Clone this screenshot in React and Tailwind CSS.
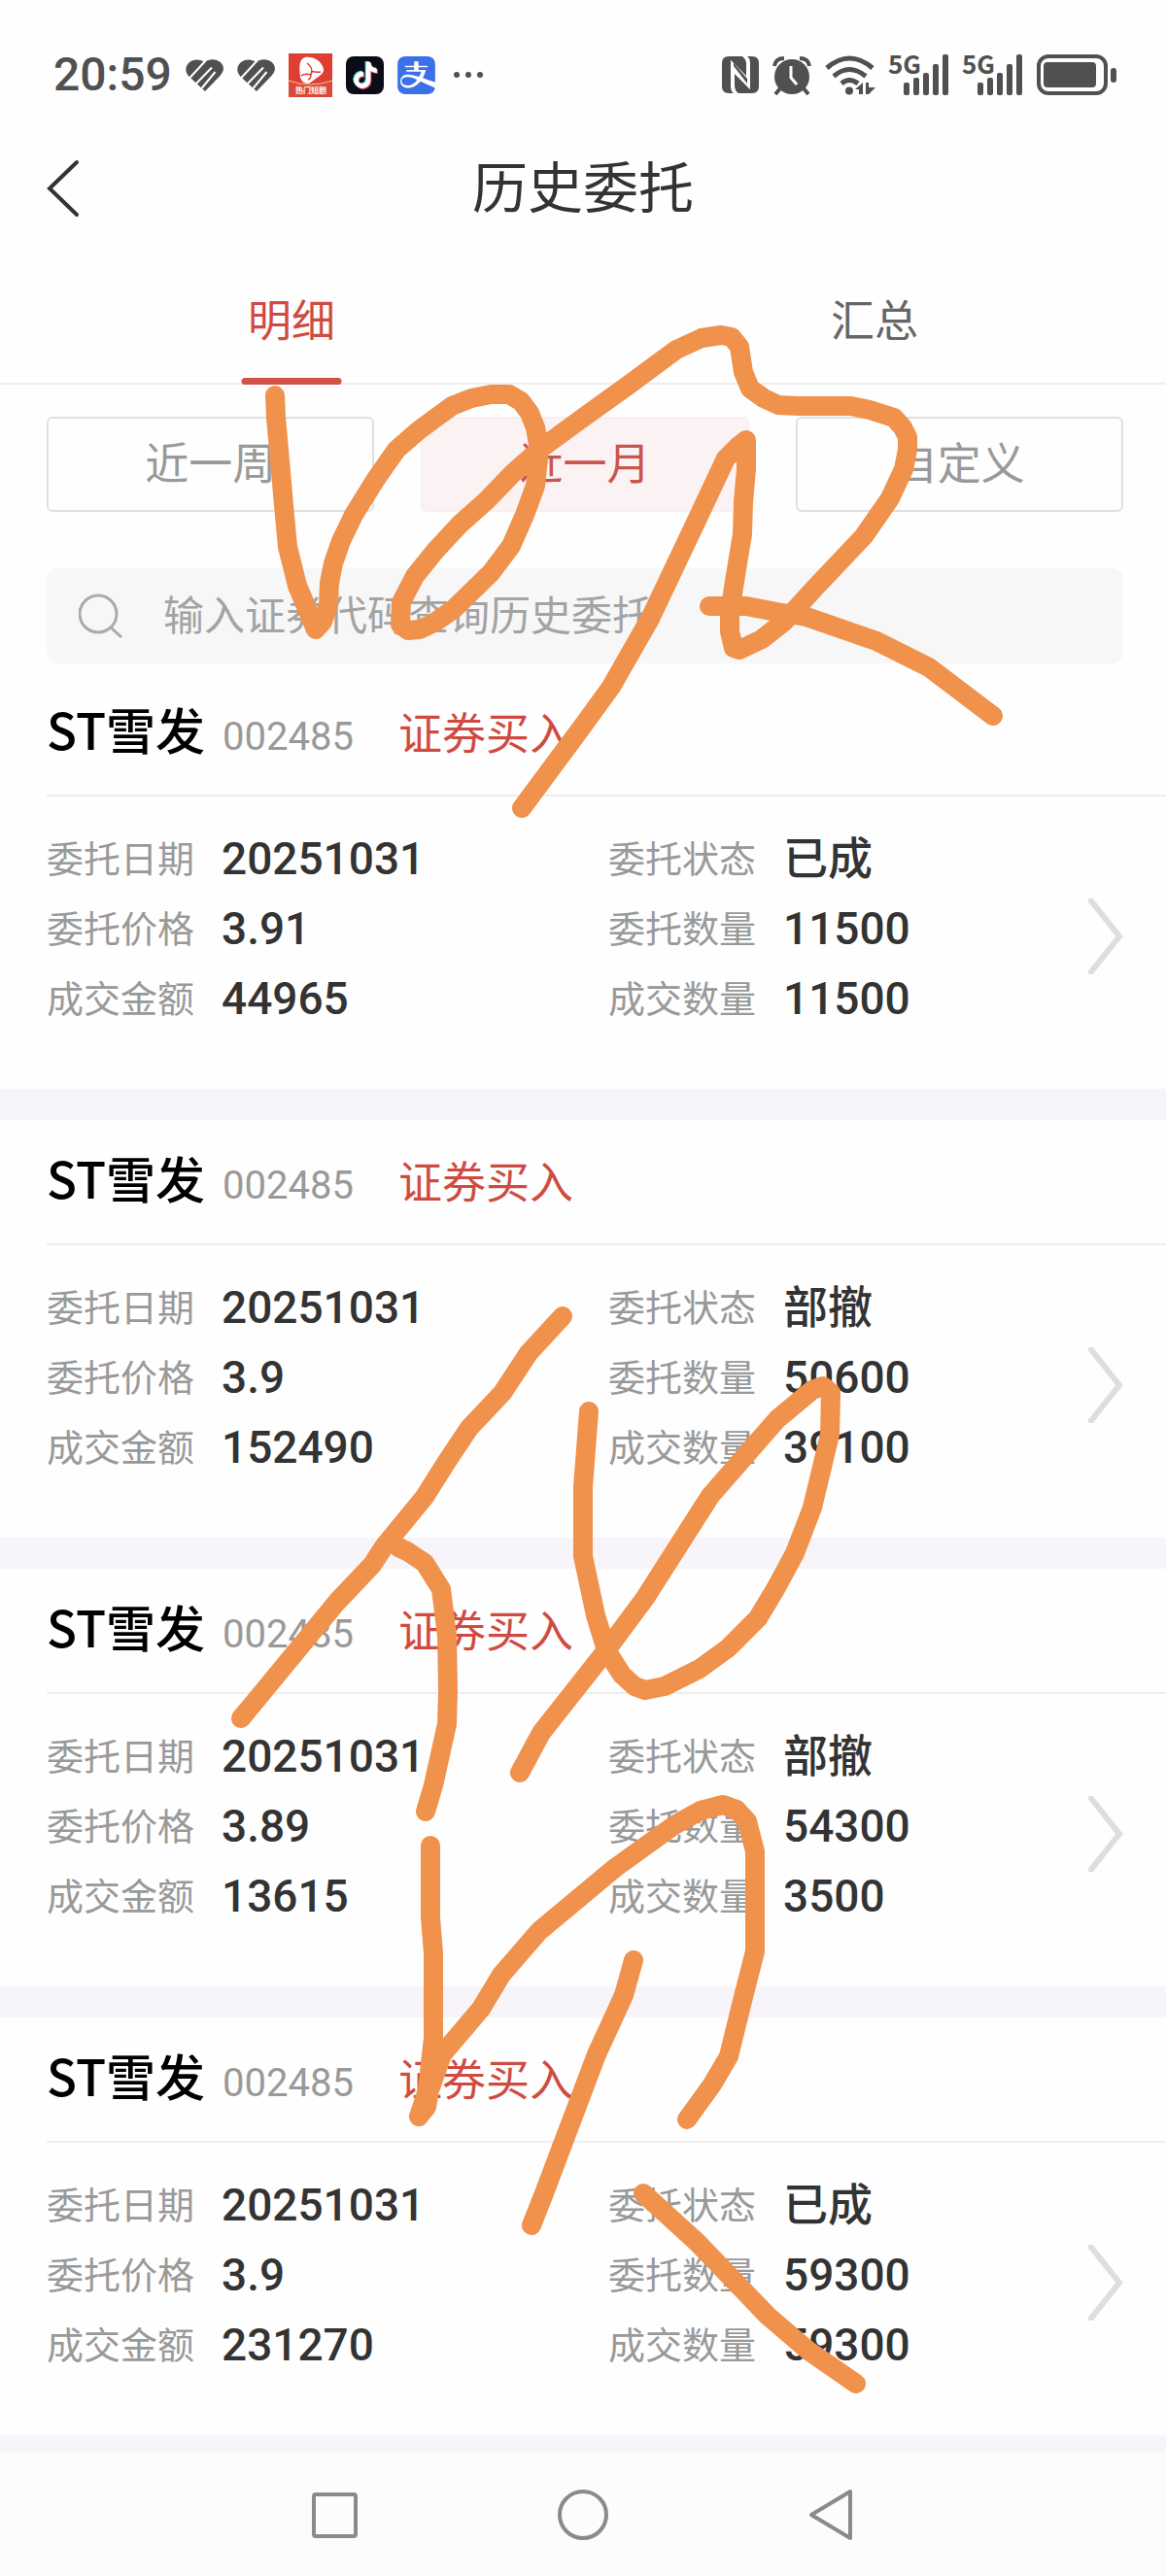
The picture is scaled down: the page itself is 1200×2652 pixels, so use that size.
import React, { useState } from "react";
import { FaTiktok } from "react-icons/fa6";
import { SiAlipay } from "react-icons/si";

const TABS = ["明细", "汇总"];
const RANGES = ["近一周", "近一月", "自定义"];

const ORDERS = [
  { date: "20251031", price: "3.91", amount: "44965", status: "已成", count: "11500", filled: "11500" },
  { date: "20251031", price: "3.9", amount: "152490", status: "部撤", count: "50600", filled: "39100" },
  { date: "20251031", price: "3.89", amount: "13615", status: "部撤", count: "54300", filled: "3500" },
  { date: "20251031", price: "3.9", amount: "231270", status: "已成", count: "59300", filled: "59300" },
];

// Freehand strokes, in page coordinates
const STROKES = [
  "283,407 284,430 287,463 292,520 296,563 306,603 325,648 332,640 338,623 339,600 343,580 351,557 364,530 387,493 408,463 431,443 465,418 485,410 505,406 524,406 536,413 545,425 551,440 555,463 551,500 540,530 526,562 505,590 467,627 447,641 432,648 420,649 412,643 413,620 427,593 448,567 473,540 501,515 528,487 555,463 600,430 646,397 696,360 722,348 742,345 753,347 761,357 763,370 765,383 772,400 786,410 801,417 822,418 876,418 895,422 920,430 929,440 934,450 934,463 930,483 916,513 889,552 837,607 807,640 784,658 761,669 755,667 751,650 751,630 759,580 764,550 765,517 768,483 768,453 759,460 747,472 715,540 669,637 629,707 600,747 537,832",
  "730,624 768,624 799,630 830,635 902,660 956,687 1022,737",
  "579,1355 544,1393 517,1434 483,1470 459,1506 437,1541 396,1591 383,1611 347,1649 258,1757 248,1769",
  "410,1593 419,1597 437,1609 454,1636 460,1684 461,1741 460,1775 446,1838 438,1865",
  "606,1453 600,1531 600,1602 613,1663 624,1699 640,1724 653,1736 664,1740 684,1736 720,1718 749,1697 780,1666 798,1636 818,1599 836,1552 854,1477 855,1434 847,1427 836,1431 800,1461 731,1540 664,1645 624,1699 557,1784 535,1825",
  "443,1900 443,1974 446,2011 446,2098 440,2152 431,2179 439,2169 442,2152 455,2115 495,2068 516,2033 555,1988 633,1923 694,1879 721,1864 744,1858 758,1863 769,1875 777,1906 777,2009 765,2056 750,2117 733,2146 707,2182",
  "652,2018 642,2054 614,2115 580,2205 560,2258 547,2291",
  "662,2258 717,2308 790,2384 832,2420 881,2454",
];

function HeartIcon() {
  return (
    <svg viewBox="0 0 39 33" className="h-[33px] w-[39px]" fill="none">
      <path d="M19.500 3C16 0 8-1 3.500 3.500c-4.500 4.500-4 10 0 14.300L20 33l15.500-16c4.400-4.500 4.500-10 .5-13.700-4.500-4.300-12-4-16.500-.3z" fill="#505050" />
      <path d="M4 19.500 21 1M10 26 27 8.500M16.500 30 30.500 13" stroke="#fefefe" strokeWidth="2" />
    </svg>
  );
}

function DramaIcon() {
  return (
    <svg viewBox="0 0 45 45" className="h-[45px] w-[45px]">
      <rect width="45" height="45" fill="#df3f33" />
      <path d="M0 28q22 8 45 0v17H0z" fill="#d94a3a" />
      <path d="M0 28q22 8 45 0" stroke="#f6c08c" fill="none" />
      <path d="M17 4c9-1 17 4 19 12 1 5-6 8-12 13-5 4-11 1-12-5-1-8-2-18 5-20z" fill="#fff" />
      <path d="M19 10q7 5 4 12M23 22q-6-2-10 1M23 18q6 2 10 1M23 22q0 4-3 5" stroke="#df3f33" strokeWidth="1.500" fill="none" />
      <text x="23" y="41" fontSize="8" fontWeight="700" fill="#fff" textAnchor="middle">热门短剧</text>
    </svg>
  );
}

function TiktokIcon() {
  return (
    <span className="relative flex h-[39px] w-[39px] items-center justify-center rounded-lg bg-[#0c0c18]">
      <FaTiktok className="absolute left-[6px] top-[5px] h-[27px] w-[26px] text-[#4fe0e4]" />
      <FaTiktok className="absolute left-[8px] top-[7px] h-[27px] w-[26px] text-[#ef4b62]" />
      <FaTiktok className="absolute left-[7px] top-[6px] h-[27px] w-[26px] text-white" />
    </span>
  );
}

function NfcIcon() {
  return (
    <svg viewBox="0 0 38 38" className="h-[38px] w-[38px]" fill="#505050">
      <path d="M7 0h14q4 3 4 8v12L9 4v27q0 5 3 7H7q-7 0-7-7V7q0-7 7-7z" />
      <path d="M31 38H17q-4-3-4-8V18l16 16V7q0-5-3-7h5q7 0 7 7v24q0 7-7 7z" />
      <path d="M9 4v6l20 24v-6z" fill="#fefefe" />
      <path d="M12 10v-3l14 16v5z" />
    </svg>
  );
}

function AlarmIcon() {
  return (
    <svg viewBox="0 0 40 41" className="h-[41px] w-[40px]" fill="none" stroke="#505050">
      <circle cx="20" cy="22" r="18" fill="#505050" stroke="none" />
      <path d="M2 11Q3 3 12 3M28 3q9 0 10 8" strokeWidth="4" />
      <path d="m8 34-5 6M32 34l5 6" strokeWidth="4" />
      <path d="M19 11v12l6 7" stroke="#fefefe" strokeWidth="3" />
    </svg>
  );
}

function WifiIcon() {
  return (
    <svg viewBox="0 0 52 41" className="h-[41px] w-[52px]" fill="none" stroke="#505050" strokeWidth="5">
      <path d="M2 13q23-20 47 0M9 21.500q16-14 33 0M17 29q8-7 17 0" />
      <circle cx="25" cy="36.500" r="4" fill="#505050" stroke="none" />
      <path d="M31 35l8-7v12h-4v-5zM42 28h3v5h7l-7 7h-3z" fill="#505050" stroke="none" />
    </svg>
  );
}

function SignalIcon() {
  return (
    <svg viewBox="0 0 62 42" className="h-[42px] w-[62px] overflow-visible" fill="#505050">
      <text x="-1" y="20" fontSize="26" fontWeight="700" className="font-['Noto_Sans_CJK_SC',sans-serif]">5G</text>
      <rect x="15" y="29" width="6" height="13" rx="2" />
      <rect x="25" y="24" width="6" height="18" rx="2" />
      <rect x="35" y="19" width="6" height="23" rx="2" />
      <rect x="45" y="10" width="6" height="32" rx="2" />
      <rect x="55" y="0" width="6" height="42" rx="2" />
    </svg>
  );
}

function BatteryIcon() {
  return (
    <svg viewBox="0 0 82 42" className="h-[42px] w-[82px]" fill="#505050">
      <rect x="2" y="2" width="69" height="38" rx="10" fill="none" stroke="#505050" strokeWidth="4" />
      <rect x="7" y="8" width="54" height="26" rx="4" />
      <rect x="76" y="14" width="6" height="15" rx="3" />
    </svg>
  );
}

function StatusBar() {
  return (
    <div className="flex h-[154px] items-center justify-between pl-[55px] pr-[51px]">
      <div className="flex items-center gap-[14px]">
        <span className="font-['Roboto',sans-serif] text-[48px] font-medium text-[#505050]">20:59</span>
        <HeartIcon />
        <HeartIcon />
        <DramaIcon />
        <TiktokIcon />
        <span className="overflow-hidden rounded-lg bg-white">
          <SiAlipay className="h-[39px] w-[39px] text-[#3a70e8]" />
        </span>
        <svg viewBox="0 0 38 8" className="h-2 w-[38px]" fill="#505050">
          <circle cx="8" cy="4" r="3" />
          <circle cx="20" cy="4" r="3" />
          <circle cx="32" cy="4" r="3" />
        </svg>
      </div>
      <div className="flex items-center gap-[14px]">
        <NfcIcon />
        <AlarmIcon />
        <WifiIcon />
        <SignalIcon />
        <SignalIcon />
        <BatteryIcon />
      </div>
    </div>
  );
}

function Field({ label, value }) {
  return (
    <div className="flex h-[72px] items-center gap-7">
      <dt className="pb-[6px] text-[38px] text-[#999]">{label}</dt>
      <dd className="font-['Roboto','Noto_Sans_CJK_SC',sans-serif] text-[46px] font-medium text-[#333]">{value}</dd>
    </div>
  );
}

function OrderCard({ order }) {
  return (
    <li className="border-b-[32px] border-[#f7f5f9]">
      <div className="ml-12 flex h-[129px] items-baseline border-b-2 border-[#eee] pt-[21px]">
        <h2 className="text-[51px] font-medium text-black">ST雪发</h2>
        <span className="ml-[18px] font-['Roboto',sans-serif] text-[40px] text-[#999]">002485</span>
        <span className="ml-[46px] text-[45px] text-[#cf4b42]">证券买入</span>
      </div>
      <div className="grid grid-cols-2 gap-x-1 pb-[57px] pl-12 pt-7">
        <dl>
          <Field label="委托日期" value={order.date} />
          <Field label="委托价格" value={order.price} />
          <Field label="成交金额" value={order.amount} />
        </dl>
        <div className="flex items-center justify-between pr-11">
          <dl>
            <Field label="委托状态" value={order.status} />
            <Field label="委托数量" value={order.count} />
            <Field label="成交数量" value={order.filled} />
          </dl>
          <button aria-label="详情" className="pt-4">
            <svg viewBox="0 0 36 78" className="h-[78px] w-9" fill="none">
              <path d="M1 0 32 39 1 78" stroke="#dedede" strokeWidth="6" />
            </svg>
          </button>
        </div>
      </div>
    </li>
  );
}

export default function App() {
  const [tab, setTab] = useState("明细");
  const [range, setRange] = useState("近一月");

  return (
    <div className="relative overflow-hidden bg-[#fefefe] font-['Noto_Sans_CJK_SC',sans-serif]">
      <StatusBar />

      {/* Title */}
      <header className="relative flex h-20 items-center justify-center">
        <button aria-label="返回" className="absolute left-12">
          <svg viewBox="0 0 34 60" className="h-[60px] w-[34px]" fill="none">
            <path d="M31 3 3 30l28 27" stroke="#333" strokeWidth="4" strokeLinecap="round" />
          </svg>
        </button>
        <h1 className="pb-2 text-[57px] text-[#333]">历史委托</h1>
      </header>

      {/* Tabs */}
      <nav className="grid h-[162px] grid-cols-2 border-b-2 border-[#eee]">
        {TABS.map((name) => (
          <button
            key={name}
            onClick={() => setTab(name)}
            className={`relative pt-7 text-[45px] ${name === tab ? "text-[#cf4b42]" : "text-[#666]"}`}
          >
            {name}
            {name === tab && (
              <span className="absolute -bottom-[2px] left-1/2 h-[7px] w-[103px] -translate-x-1/2 rounded-full bg-[#d35147]" />
            )}
          </button>
        ))}
      </nav>

      {/* Date range */}
      <div className="grid grid-cols-3 gap-12 pl-12 pr-11 pt-[33px]">
        {RANGES.map((name) => (
          <button
            key={name}
            onClick={() => setRange(name)}
            className={`h-[98px] rounded-md border-2 pb-[6px] text-[45px] ${
              name === range ? "border-[#faeff0] bg-[#fbf2f3] text-[#c9554d]" : "border-[#e0e0e0] text-[#999]"
            }`}
          >
            {name}
          </button>
        ))}
      </div>

      {/* Search */}
      <label className="mb-2 ml-12 mr-11 mt-[58px] flex h-[98px] items-center gap-[41px] rounded-xl bg-[#f7f7f7] pl-[33px]">
        <svg viewBox="0 0 46 46" className="h-[46px] w-[46px]" fill="none" stroke="#aaa" strokeWidth="3">
          <circle cx="20" cy="21" r="19" />
          <path d="m33 35 11 10" />
        </svg>
        <input
          type="text"
          aria-label="搜索"
          placeholder="输入证券代码查询历史委托"
          className="min-w-0 flex-1 bg-transparent pb-2 text-[42px] outline-none placeholder:text-[#a3a3a3]"
        />
      </label>

      <ul>
        {ORDERS.map((order, i) => (
          <OrderCard key={i} order={order} />
        ))}
      </ul>

      {/* System navigation */}
      <footer className="relative -mt-[14px] flex h-[128px] justify-center bg-[#fcfcfc]">
        <div className="grid w-[64%] grid-cols-3 place-items-center">
          <button aria-label="最近任务">
            <svg viewBox="0 0 54 54" className="h-[54px] w-[54px]" fill="none" stroke="#8a8a8a" strokeWidth="4">
              <rect x="6" y="6" width="43" height="43" rx="2" />
            </svg>
          </button>
          <button aria-label="主页">
            <svg viewBox="0 0 54 54" className="h-[54px] w-[54px]" fill="none" stroke="#8a8a8a" strokeWidth="4">
              <circle cx="27" cy="27" r="24" />
            </svg>
          </button>
          <button aria-label="返回上级">
            <svg viewBox="0 0 54 54" className="h-[54px] w-[54px]" fill="none" stroke="#8a8a8a" strokeWidth="4" strokeLinejoin="round">
              <path d="M46 3v48L6 27z" />
            </svg>
          </button>
        </div>
      </footer>

      {/* Handwriting over the page */}
      <svg viewBox="0 0 1200 2652" className="pointer-events-none absolute left-0 top-0 w-full" fill="none">
        {STROKES.map((points, i) => (
          <polyline key={i} points={points} stroke="#f0914c" strokeWidth="20" strokeLinecap="round" strokeLinejoin="round" />
        ))}
      </svg>
    </div>
  );
}
